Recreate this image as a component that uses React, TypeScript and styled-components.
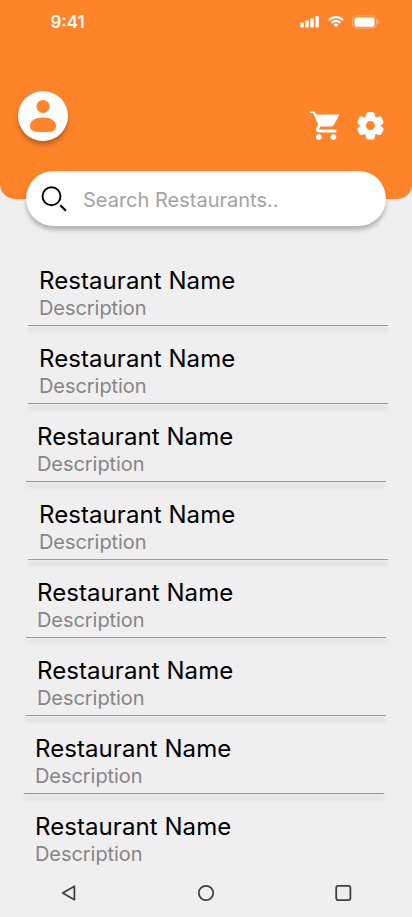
import React from 'react';
import styled, { createGlobalStyle } from 'styled-components';

const GlobalStyle = createGlobalStyle`
  * { box-sizing: border-box; }
  body { margin: 0; background: #efefef; font-family: Inter, sans-serif; }
  svg { display: block; }
`;

const Screen = styled.div`
  width: 412px;
  height: 917px;
  overflow: hidden;
  display: flex;
  flex-direction: column;
  background: #efefef;
`;

const Header = styled.header`
  height: 199px;
  flex: none;
  background: #ff8329;
  border-radius: 0 0 15px 15px;
`;

const StatusBar = styled.div`
  height: 44px;
  padding: 0 32px 0 50.5px;
  display: flex;
  align-items: center;
  justify-content: space-between;
`;

const Clock = styled.span`
  color: #fff;
  font-size: 17px;
  font-weight: 600;
  line-height: 20px;
`;

const Toolbar = styled.div`
  display: flex;
  justify-content: space-between;
  align-items: flex-start;
  padding: 47px 28px 0 18px;
`;

const Avatar = styled.button`
  width: 50px;
  height: 50px;
  padding: 0;
  border: 0;
  border-radius: 50%;
  background: #fff;
  box-shadow: 0 4px 4px rgba(0, 0, 0, 0.25);
`;

const Actions = styled.div`
  display: flex;
  gap: 16px;
  padding-top: 19px;
`;

const SearchBar = styled.label`
  flex: none;
  display: flex;
  align-items: center;
  height: 55px;
  margin: -28px 26px 22px;
  padding: 0 15px;
  gap: 16px;
  border-radius: 27.5px;
  background: #fff;
  box-shadow: 0 4px 4px rgba(0, 0, 0, 0.25);
  position: relative;
`;

const SearchInput = styled.input`
  flex: 1;
  min-width: 0;
  padding: 0;
  border: 0;
  outline: 0;
  height: 24px;
  margin-top: 2px;
  background: transparent;
  font: 400 20px/24px Inter, sans-serif;
  color: #000;
  &::placeholder { color: #a3a3a3; opacity: 1; }
`;

const List = styled.ul`
  list-style: none;
  margin: 0;
  padding: 0;
`;

const Row = styled.li<{ $inset: number; $divider: boolean }>`
  width: 360px;
  height: 78px;
  margin-left: ${(p) => p.$inset}px;
  padding: 18px 11px 0;
  border-bottom: 1px solid ${(p) => (p.$divider ? '#9b9b9b' : 'transparent')};
  &::after {
    content: '';
    display: ${(p) => (p.$divider ? 'block' : 'none')};
    height: 1px;
    margin: 5px -11px 0;
    box-shadow: 0 4px 4px rgba(0, 0, 0, 0.25);
  }
`;

const Name = styled.div`
  font-size: 24px;
  line-height: 29px;
  letter-spacing: 0.07px;
  color: #000;
`;

const Description = styled.div`
  margin-top: 1px;
  font-size: 20px;
  line-height: 24px;
  letter-spacing: -0.06px;
  color: #868686;
`;

const NavBar = styled.nav`
  height: 45px;
  flex: none;
  display: grid;
  grid-template-columns: repeat(3, 1fr);
  justify-items: center;
  padding-top: 9px;
`;

const rows = [28, 28, 26, 28, 26, 26, 24, 24];

const StatusIcons = () => (
  <svg width="80" height="14" viewBox="0 0 80 14" fill="#fff">
    <rect x="0.3" y="7.5" width="3.5" height="5" rx="0.8" />
    <rect x="5.3" y="5.5" width="3.5" height="7" rx="0.8" />
    <rect x="10.3" y="3.2" width="3.5" height="9.3" rx="0.8" />
    <rect x="15.3" y="1" width="3.5" height="11.5" rx="0.8" />
    <path d="M36 3.3c2.3 0 4.5.9 6.1 2.5.1.1.3.1.4 0l1.2-1.2c.1-.1.1-.3 0-.5a11 11 0 0 0-15.4 0c-.1.2-.1.4 0 .5l1.2 1.2c.1.1.3.1.4 0A8.8 8.8 0 0 1 36 3.3zM36 7.2c1.3 0 2.5.5 3.4 1.3.1.1.3.1.4 0l1.2-1.2c.1-.1.1-.3 0-.5a7.3 7.3 0 0 0-10 0c-.1.2-.1.4 0 .5l1.2 1.2c.1.1.3.1.4 0A5 5 0 0 1 36 7.2zM38.3 9.9c.1-.1.1-.3 0-.4a3.6 3.6 0 0 0-4.6 0c-.1.1-.1.3 0 .4l2.1 2.1c.1.1.3.1.4 0z" />
    <rect x="52.5" y="0.7" width="24" height="12.3" rx="3.8" fill="none" stroke="#fff" strokeOpacity="0.35" />
    <rect x="54.4" y="2.3" width="20.2" height="9.4" rx="2.5" />
    <path d="M77.7 5v4c.8-.3 1.3-1.1 1.3-2S78.500 5.300 77.700 5z" opacity="0.4" />
  </svg>
);

const PersonIcon = () => (
  <svg width="50" height="50" viewBox="0 0 50 50" fill="#ff8329">
    <circle cx="25" cy="15.400" r="6.500" />
    <path d="M12 34.800C12 29.800 17.800 26.600 25 26.600S38 29.800 38 34.800C38 39.800 34.500 41.100 25 41.100S12 39.800 12 34.800Z" />
  </svg>
);

const CartIcon = () => (
  <svg width="31" height="30" viewBox="1 2 21.200 20" preserveAspectRatio="none" fill="#fff">
    <path d="M7 18c-1.100 0-1.990.9-1.990 2S5.900 22 7 22s2-.9 2-2-.9-2-2-2zM1 2v2h2l3.600 7.590-1.350 2.450c-.16.28-.25.61-.25.96 0 1.100.9 2 2 2h12v-2H7.420c-.14 0-.25-.11-.25-.25l.03-.12.9-1.630h7.450c.75 0 1.410-.41 1.750-1.030l3.900-7.010H5.210l-.94-2H1zm16 16c-1.100 0-1.990.9-1.990 2s.89 2 1.990 2 2-.9 2-2-.9-2-2-2z" />
  </svg>
);

const GearIcon = () => (
  <svg width="27" height="30" viewBox="0 0 27 30">
    <path
      fill="#fff"
      stroke="#fff"
      strokeWidth="4.400"
      strokeLinejoin="round"
      d="M11.300 4.100H15.500L16.400 8.200L19.100 9.700L22.600 8.500L24.300 12.200L21.300 14.600V16.800L24.300 19.200L22.600 22.800L19.100 21.600L16.400 23.200L15.500 27.200H11.300L10.400 23.200L7.700 21.600L4.200 22.800L2.500 19.200L5.500 16.800V14.600L2.500 12.200L4.200 8.500L7.700 9.700L10.400 8.200Z"
    />
    <circle cx="13.400" cy="15.600" r="4.500" fill="#ff8329" />
  </svg>
);

const SearchIcon = () => (
  <svg width="26" height="27" viewBox="0 0 26 27" fill="none" stroke="#000" strokeWidth="1.900">
    <circle cx="10.500" cy="11.200" r="9" />
    <path d="M19.300 20.200L24.900 25.800" strokeWidth="2.100" />
  </svg>
);

export default function App() {
  return (
    <Screen>
      <GlobalStyle />
      <Header>
        <StatusBar>
          <Clock>9:41</Clock>
          <StatusIcons />
        </StatusBar>
        <Toolbar>
          <Avatar aria-label="Profile"><PersonIcon /></Avatar>
          <Actions>
            <CartIcon />
            <GearIcon />
          </Actions>
        </Toolbar>
      </Header>
      <SearchBar>
        <SearchIcon />
        <SearchInput placeholder="Search Restaurants.." />
      </SearchBar>
      <List>
        {rows.map((inset, i) => (
          <Row key={i} $inset={inset} $divider={i < rows.length - 1}>
            <Name>Restaurant Name</Name>
            <Description>Description</Description>
          </Row>
        ))}
      </List>
      <NavBar>
        <svg width="24" height="24" viewBox="0 0 24 24" fill="none" stroke="#404040" strokeWidth="1.800">
          <path d="M17.400 5.300V18.700L5.700 12Z" strokeLinejoin="round" />
        </svg>
        <svg width="24" height="24" viewBox="0 0 24 24" fill="none" stroke="#404040" strokeWidth="1.800">
          <circle cx="12" cy="12" r="7.200" />
        </svg>
        <svg width="24" height="24" viewBox="0 0 24 24" fill="none" stroke="#404040" strokeWidth="1.800">
          <rect x="5.200" y="4.900" width="14.200" height="14.200" rx="2" />
        </svg>
      </NavBar>
    </Screen>
  );
}
